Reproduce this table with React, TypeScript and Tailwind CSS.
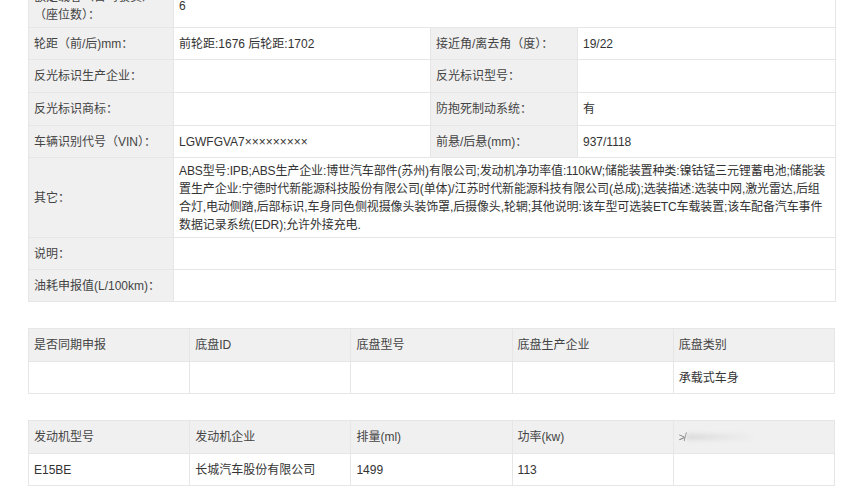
import React from 'react';

type Row = {
  cells: { label: React.ReactNode; value?: React.ReactNode; span?: boolean }[];
  h: string;
};

const rows: Row[] = [
  {
    h: 'h-[44px]',
    cells: [
      {
        label: (
          <>
            额定载客（含驾驶员）
            <br />
            （座位数）：
          </>
        ),
        value: '6',
        span: true,
      },
    ],
  },
  {
    h: 'h-[32px]',
    cells: [
      { label: '轮距（前/后)mm：', value: '前轮距:1676 后轮距:1702' },
      { label: '接近角/离去角（度）：', value: '19/22' },
    ],
  },
  {
    h: 'h-[33px]',
    cells: [
      { label: '反光标识生产企业：', value: '' },
      { label: '反光标识型号：', value: '' },
    ],
  },
  {
    h: 'h-[33px]',
    cells: [
      { label: '反光标识商标：', value: '' },
      { label: '防抱死制动系统：', value: '有' },
    ],
  },
  {
    h: 'h-[32px]',
    cells: [
      { label: '车辆识别代号（VIN）：', value: 'LGWFGVA7×××××××××' },
      { label: '前悬/后悬(mm)：', value: '937/1118' },
    ],
  },
];

// line breaks kept as in the source page
const otherLines = [
  'ABS型号:IPB;ABS生产企业:博世汽车部件(苏州)有限公司;发动机净功率值:110kW;储能装置种类:镍钴锰三元锂蓄电池;储能装',
  '置生产企业:宁德时代新能源科技股份有限公司(单体)/江苏时代新能源科技有限公司(总成);选装描述:选装中网,激光雷达,后组',
  '合灯,电动侧踏,后部标识,车身同色侧视摄像头装饰罩,后摄像头,轮辋;其他说明:该车型可选装ETC车载装置;该车配备汽车事件',
  '数据记录系统(EDR);允许外接充电.',
];

const label = 'flex items-center px-[5px] bg-[#f0f0f0] text-[#444] border-b border-r border-[#e6e6e6]';
const value = 'flex items-center px-[5px] bg-white text-[#333] border-b border-r border-[#e6e6e6]';

function Grid5({ head, body }: { head: React.ReactNode[]; body: React.ReactNode[] }) {
  return (
    <div className="grid grid-cols-5 border-l border-t border-[#e6e6e6]">
      {head.map((h, i) => (
        <div key={'h' + i} className={label + ' h-[33px]'}>
          {h}
        </div>
      ))}
      {body.map((b, i) => (
        <div key={'b' + i} className={value + ' h-[32px]'}>
          {b}
        </div>
      ))}
    </div>
  );
}

export default function App() {
  return (
    <div
      className="w-[852px] h-[503px] overflow-hidden bg-white text-[12px] leading-[18px]"
      style={{ fontFamily: '"Liberation Sans", "Noto Sans CJK SC", sans-serif' }}
    >
      <div className="mx-[28px] w-[807px] -mt-[16px]">
        <div className="grid grid-cols-[145px_257px_147px_258px] border-l border-[#e6e6e6]">
          {rows.map((r, ri) =>
            r.cells.map((c, ci) => (
              <React.Fragment key={ri + '-' + ci}>
                <div className={label + ' ' + r.h}>
                  <div>{c.label}</div>
                </div>
                <div className={value + ' ' + r.h + (c.span ? ' col-span-3' : '')}>{c.value}</div>
              </React.Fragment>
            ))
          )}
          <div className={label + ' h-[80px]'}>其它：</div>
          <div className={value + ' h-[80px] col-span-3'}>
            <div className="whitespace-nowrap tracking-[-0.12px]">
              {otherLines.map((l, i) => (
                <div key={i}>{l}</div>
              ))}
            </div>
          </div>
          <div className={label + ' h-[32px]'}>说明：</div>
          <div className={value + ' h-[32px] col-span-3'} />
          <div className={label + ' h-[32px]'}>油耗申报值(L/100km)：</div>
          <div className={value + ' h-[32px] col-span-3'} />
        </div>

        <div className="mt-[26px]">
          <Grid5
            head={['是否同期申报', '底盘ID', '底盘型号', '底盘生产企业', '底盘类别']}
            body={['', '', '', '', '承载式车身']}
          />
        </div>

        <div className="mt-[26px]">
          <Grid5
            head={[
              '发动机型号',
              '发动机企业',
              '排量(ml)',
              '功率(kw)',
              <span key="w" className="flex items-center">
                <span className="text-[#777] blur-[0.4px] text-[11px]">≯</span>
                <span className="ml-[1px] h-[6px] w-[70px] rounded-full bg-gradient-to-r from-[#d8d8d8] to-transparent blur-[2px]" />
              </span>,
            ]}
            body={['E15BE', '长城汽车股份有限公司', '1499', '113', '']}
          />
        </div>
      </div>
    </div>
  );
}
